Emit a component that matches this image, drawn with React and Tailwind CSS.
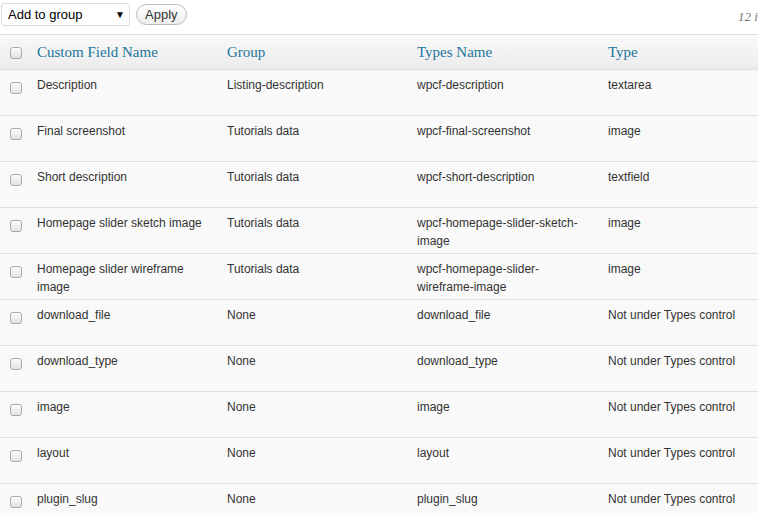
const rows = [
  { name: 'Description', group: 'Listing-description', types: 'wpcf-description', type: 'textarea' },
  { name: 'Final screenshot', group: 'Tutorials data', types: 'wpcf-final-screenshot', type: 'image' },
  { name: 'Short description', group: 'Tutorials data', types: 'wpcf-short-description', type: 'textfield' },
  { name: 'Homepage slider sketch image', group: 'Tutorials data', types: ['wpcf-homepage-slider-sketch-', 'image'], type: 'image' },
  { name: ['Homepage slider wireframe', 'image'], group: 'Tutorials data', types: ['wpcf-homepage-slider-', 'wireframe-image'], type: 'image' },
  { name: 'download_file', group: 'None', types: 'download_file', type: 'Not under Types control' },
  { name: 'download_type', group: 'None', types: 'download_type', type: 'Not under Types control' },
  { name: 'image', group: 'None', types: 'image', type: 'Not under Types control' },
  { name: 'layout', group: 'None', types: 'layout', type: 'Not under Types control' },
  { name: 'plugin_slug', group: 'None', types: 'plugin_slug', type: 'Not under Types control' },
];

const Lines = ({ value }) =>
  Array.isArray(value) ? value.map((l, i) => <div key={i}>{l}</div>) : <div>{value}</div>;

const Check = () => (
  <span className="block w-[12px] h-[12px] rounded-[3px] border border-[#a9a9a9] bg-gradient-to-b from-[#fdfdfd] to-[#e3e3e3]" />
);

const cols = 'grid grid-cols-[30px_190px_190px_191px_1fr]';

export default function App() {
  return (
    <div className="w-[758px] h-[513px] overflow-hidden bg-white font-['Liberation_Sans',Arial,sans-serif]">
      {/* bulk actions */}
      <div className="h-[34px] flex items-start pt-[3px] relative">
        <div className="w-[129px] h-[23px] ml-[1px] border border-[#dcdcdc] rounded-[3px] bg-white flex items-center justify-between pl-[6px] pr-[4px] text-[13px] text-black">
          <span>Add to group</span>
          <span className="text-[10px]">▼</span>
        </div>
        <div className="ml-[6px] mt-[1px] h-[21px] px-[8px] rounded-full border border-[#bbb] bg-gradient-to-b from-white to-[#ededed] flex items-center text-[13px] text-[#333]">
          Apply
        </div>
        <span className="absolute left-[738px] top-[7px] whitespace-nowrap italic text-[13px] text-[#777] font-['Liberation_Serif',Georgia,serif]">
          12 items
        </span>
      </div>

      <div className="border-t border-[#dfdfdf]">
        <div className={`${cols} h-[35px] items-center bg-gradient-to-b from-[#f9f9f9] to-[#ececec] border-b border-[#dfdfdf] text-[15px] text-[#21759b] font-['Liberation_Serif',Georgia,serif]`}>
          <div className="pl-[10px] pt-[1px]"><Check /></div>
          <div className="pl-[7px]">Custom Field Name</div>
          <div className="pl-[7px]">Group</div>
          <div className="pl-[7px]">Types Name</div>
          <div className="pl-[7px]">Type</div>
        </div>

        {rows.map((r, i) => (
          <div key={i} className={`${cols} h-[46px] bg-[#f9f9f9] border-b border-[#dfdfdf] text-[12px] leading-[18px] text-[#333] whitespace-nowrap`}>
            <div className="pl-[10px] pt-[12px]"><Check /></div>
            <div className="pl-[7px] pt-[6px]"><Lines value={r.name} /></div>
            <div className="pl-[7px] pt-[6px]"><Lines value={r.group} /></div>
            <div className="pl-[7px] pt-[6px]"><Lines value={r.types} /></div>
            <div className="pl-[7px] pt-[6px]"><Lines value={r.type} /></div>
          </div>
        ))}
      </div>
    </div>
  );
}
